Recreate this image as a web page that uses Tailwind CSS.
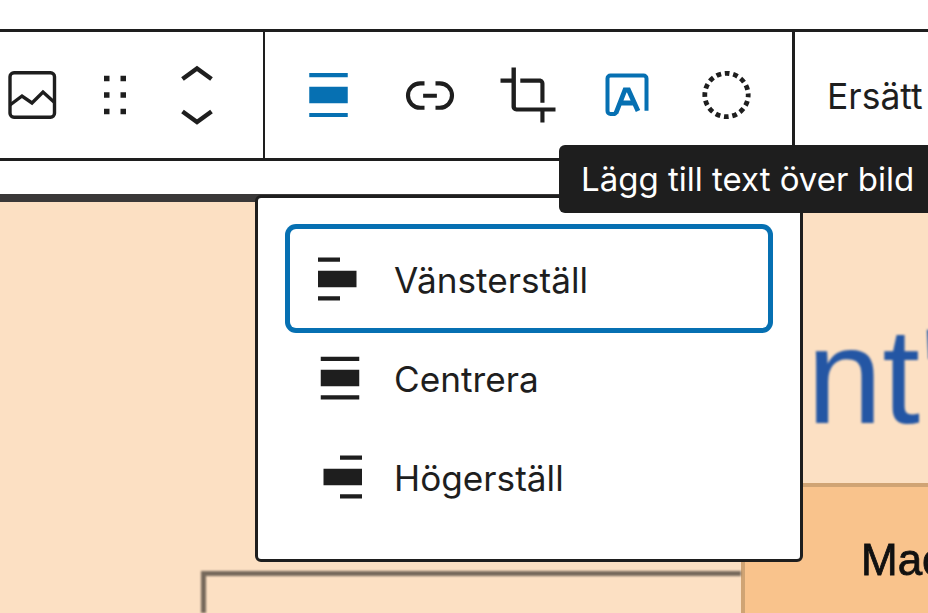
<!DOCTYPE html>
<html lang="en">
  <head>
    <meta charset="UTF-8" />
    <title>Bildblock</title>
    <script src="https://cdn.jsdelivr.net/npm/@tailwindcss/browser@4"></script>
  </head>
  <body class="bg-white">
    <div class="relative w-[928px] h-[613px] pt-[29px] overflow-hidden font-[Inter] text-[#1e1e1e]">
      <!-- Toolbar -->
      <div class="h-[132px] flex border-y-[3px] border-[#1e1e1e]">
        <div class="w-[265px] shrink-0 flex items-center gap-[17px] border-r-2 border-[#1e1e1e]">
          <svg class="w-[66px] h-[66px] shrink-0 -ml-px" viewBox="0 0 66 66" fill="none" stroke="#1e1e1e">
            <rect x="11" y="10.7" width="44.5" height="44.5" rx="4" stroke-width="3.4" />
            <path d="M11 43L23 34L33 41L44 30L55 40" stroke-width="3.4" />
          </svg>
          <svg class="w-[66px] h-[66px] shrink-0" viewBox="0 0 24 24" fill="#1e1e1e">
            <path d="M8 7h2V5H8v2zm0 6h2v-2H8v2zm0 6h2v-2H8v2zm6-14v2h2V5h-2zm0 8h2v-2h-2v2zm0 6h2v-2h-2v2z" />
          </svg>
          <svg class="w-[66px] h-[66px] shrink-0 -translate-x-px" viewBox="0 0 66 66" fill="none" stroke="#1e1e1e" stroke-width="4.5">
            <path d="M18.5 17L33 6.5L47.5 17" />
            <path d="M18.5 49.5L33 60L47.5 49.5" />
          </svg>
        </div>
        <div class="w-[530px] shrink-0 flex items-center pl-[32px] gap-[33px] border-r-[3px] border-[#1e1e1e]">
          <svg class="w-[66px] h-[66px] shrink-0 -translate-x-[1.5px]" viewBox="0 0 24 24" fill="#0670b2">
            <path d="M19 5.5H5V4h14v1.5ZM19 20H5v-1.5h14V20ZM5 9h14v6H5V9Z" />
          </svg>
          <svg class="w-[66px] h-[66px] shrink-0 translate-x-px" viewBox="0 0 24 24" fill="#1e1e1e">
            <path d="M10 17.389H8.444A5.194 5.194 0 1 1 8.444 7H10v1.5H8.444a3.694 3.694 0 0 0 0 7.389H10v1.5ZM14 7h1.556a5.194 5.194 0 0 1 0 10.39H14v-1.5h1.556a3.694 3.694 0 0 0 0-7.39H14V7Zm-4.5 6h5v-1.5h-5V13Z" />
          </svg>
          <svg class="w-[66px] h-[66px] shrink-0" viewBox="0 0 24 24" fill="#1e1e1e">
            <path d="M16.5 7.8v7H18v-7c0-1-.8-1.8-1.8-1.8h-7v1.5h7c.2 0 .3.1.3.3zm-8.7 8.7c-.1 0-.2-.1-.2-.3V2H6v4H2v1.5h4v8.7C6 17.2 6.8 18 7.8 18h8.7v4H18v-4h4v-1.5H7.8z" />
          </svg>
          <svg class="w-[66px] h-[66px] shrink-0" viewBox="0 0 66 66" fill="none" stroke="#0670b2">
            <path d="M52.5 48.7V16.5a3 3 0 0 0-3-3H16.5a3 3 0 0 0-3 3V49a3 3 0 0 0 3 3H19.5q2 0 3-2" stroke-width="4" />
            <path d="M22 51L31 28h3.5L44 49M26 41H40" stroke-width="4.8" />
          </svg>
          <svg class="w-[66px] h-[66px] shrink-0 translate-x-[0.5px]" viewBox="0 0 66 66" fill="none" stroke="#1e1e1e" stroke-width="4.8">
            <circle cx="33" cy="33" r="21.7" stroke-dasharray="4.8 3.72" stroke-dashoffset="2.4" />
          </svg>
        </div>
        <div class="pl-[32px] pt-[3px] flex items-center text-[35.5px] whitespace-nowrap">Ersätt</div>
      </div>

      <div class="h-[33px]"></div>

      <!-- Image in the editor canvas -->
      <div class="h-[419px] border-t-8 border-[#3a3838] bg-[#fce0c3] overflow-hidden font-['Liberation_Sans',sans-serif]">
        <div class="pt-[107px] pl-[731px] h-[281px] text-[136px] leading-[134px] text-[#2456a4] whitespace-nowrap blur-[1px]">ent's</div>
        <div class="flex h-[130px]">
          <div class="w-[741px] shrink-0 pl-[201px] pt-[88px]">
            <div class="h-full border-t-[5px] border-l-[5px] border-[#75685b] blur-[1px]"></div>
          </div>
          <div class="flex-1 bg-[#f9c38c] border-t-4 border-l-4 border-[#d0a474] pl-[116px] pt-[48px] text-[44px] leading-[50px] text-[#111] [-webkit-text-stroke:0.8px_#111] whitespace-nowrap">
            <span class="blur-[0.6px] inline-block">Mac</span>
          </div>
        </div>
      </div>

      <!-- Alignment dropdown -->
      <div class="absolute left-[255px] top-[195px] w-[548px] bg-white border-[3px] border-[#1e1e1e] rounded-[6px] px-[32px] pt-[31px] pb-[33px]">
        <div class="h-[99px] flex items-center pl-[17px] gap-[21px] rounded-[6px] ring-[5px] ring-[#0670b2] text-[35.2px]">
          <svg class="w-[66px] h-[66px] shrink-0" viewBox="0 0 24 24" fill="#1e1e1e"><path d="M4 9v6h14V9H4zm8-4.8H4v1.5h8V4.2zM4 19.8h8v-1.5H4v1.5z" /></svg>
          <span class="pt-[3px]">Vänsterställ</span>
        </div>
        <div class="h-[99px] flex items-center pl-[17px] gap-[21px] text-[35.2px]">
          <svg class="w-[66px] h-[66px] shrink-0" viewBox="0 0 24 24" fill="#1e1e1e"><path d="M5 9v6h14V9H5zM5 19.8h14v-1.5H5v1.5zM5 4.3v1.5h14V4.3H5z" /></svg>
          <span class="pt-[3px]">Centrera</span>
        </div>
        <div class="h-[99px] flex items-center pl-[17px] gap-[21px] text-[35.2px]">
          <svg class="w-[66px] h-[66px] shrink-0" viewBox="0 0 24 24" fill="#1e1e1e"><path d="M6 15h14V9H6v6zm6-10.8v1.5h8V4.2h-8zm0 15.6h8v-1.5h-8v1.5z" /></svg>
          <span class="pt-[3px]">Högerställ</span>
        </div>
      </div>

      <!-- Tooltip -->
      <div class="absolute left-[559px] top-[145px] w-[400px] h-[68px] flex items-center pl-[22px] pt-[2px] bg-[#1e1e1e] rounded-[6px] text-white text-[33px] whitespace-nowrap">Lägg till text över bild</div>
    </div>
  </body>
</html>
